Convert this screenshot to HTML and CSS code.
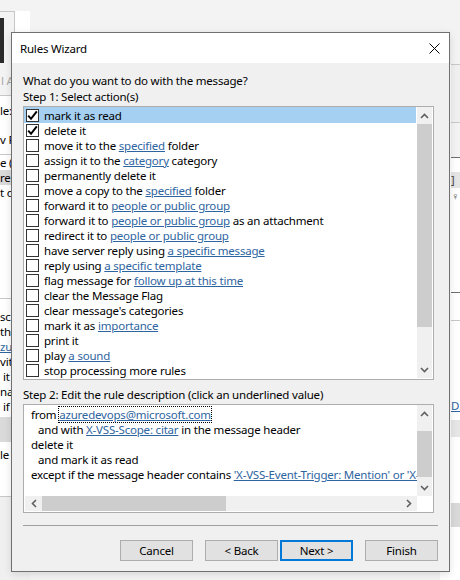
FILE: index.html
```html
<!DOCTYPE html>
<html>
<head>
<meta charset="utf-8">
<title>Rules Wizard</title>
<link rel="stylesheet" href="styles.css">
</head>
<body>
<div class="desktop">
  <div class="bg-left">
    <div class="bg-top"></div>
    <div class="thumb-frame"><div class="thumb-dark"></div></div>
    <div class="bg-line txt dim">l A</div>
    <div class="bg-rule"></div>
    <div class="bg-line txt">le:</div>
    <div class="bg-line txt">v R</div>
    <div class="bg-rule"></div>
    <div class="bg-row txt">e (a</div>
    <div class="bg-row txt sel">re</div>
    <div class="bg-row txt">t o</div>
    <div class="bg-fill98"></div>
    <div class="bg-rule"></div>
    <div class="bg-gap10"></div>
    <div class="bg-row txt">scr</div>
    <div class="bg-row txt">thi</div>
    <div class="bg-row txt link">zu</div>
    <div class="bg-row txt">vit</div>
    <div class="bg-row txt ind">it</div>
    <div class="bg-row txt">na</div>
    <div class="bg-row txt ind">if</div>
    <div class="bg-bar"></div>
    <div class="bg-gap6"></div>
    <div class="bg-row txt">le</div>
    <div class="bg-gap35"></div>
    <div class="bg-rule"></div>
    <div class="bg-bottom"></div>
  </div>

  <div class="bg-right">
    <div class="r-top"></div>
    <div class="r-rule"></div>
    <div class="r-band57"></div>
    <div class="r-rule"></div>
    <div class="r-band34"></div>
    <div class="r-rule dark"></div>
    <div class="r-gap14"></div>
    <div class="r-row grey"><span class="r-glyph">]</span></div>
    <div class="r-row"><span class="r-glyph">&#x2640;</span></div>
    <div class="r-gap90"></div>
    <div class="r-rule dark"></div>
    <div class="r-gap27"></div>
    <div class="r-rule"></div>
    <div class="r-gap77"></div>
    <div class="r-row link">D:</div>
    <div class="r-bar17"></div>
    <div class="r-gap65"></div>
    <div class="r-bar24"></div>
  </div>

  <div class="dialog">
    <div class="titlebar">
      <span class="title">Rules Wizard</span>
      <svg class="close" width="11" height="11" viewBox="0 0 11 11"><path d="M0.5 0.5 L10.5 10.5 M10.5 0.5 L0.5 10.5" stroke="#000" stroke-width="1" fill="none"/></svg>
    </div>
    <div class="body">
      <div class="label first">What do you want to do with the message?</div>
      <div class="label">Step 1: Select action(s)</div>

      <div class="listbox actions">
        <ul class="rows">
          <li class="row selected"><span class="cb"><svg width="11" height="11" viewBox="0 0 11 11"><path d="M1.2 5.6 L4 8.8 L9.8 1.4" stroke="#000" stroke-width="2" fill="none"/></svg></span><span>mark it as read</span></li>
          <li class="row"><span class="cb"><svg width="11" height="11" viewBox="0 0 11 11"><path d="M1.2 5.6 L4 8.8 L9.8 1.4" stroke="#000" stroke-width="2" fill="none"/></svg></span><span>delete it</span></li>
          <li class="row"><span class="cb"></span><span>move it to the <a>specified</a> folder</span></li>
          <li class="row"><span class="cb"></span><span>assign it to the <a>category</a> category</span></li>
          <li class="row"><span class="cb"></span><span>permanently delete it</span></li>
          <li class="row"><span class="cb"></span><span>move a copy to the <a>specified</a> folder</span></li>
          <li class="row"><span class="cb"></span><span>forward it to <a>people or public group</a></span></li>
          <li class="row"><span class="cb"></span><span>forward it to <a>people or public group</a> as an attachment</span></li>
          <li class="row"><span class="cb"></span><span>redirect it to <a>people or public group</a></span></li>
          <li class="row"><span class="cb"></span><span>have server reply using <a>a specific message</a></span></li>
          <li class="row"><span class="cb"></span><span>reply using <a>a specific template</a></span></li>
          <li class="row"><span class="cb"></span><span>flag message for <a>follow up at this time</a></span></li>
          <li class="row"><span class="cb"></span><span>clear the Message Flag</span></li>
          <li class="row"><span class="cb"></span><span>clear message's categories</span></li>
          <li class="row"><span class="cb"></span><span>mark it as <a>importance</a></span></li>
          <li class="row"><span class="cb"></span><span>print it</span></li>
          <li class="row"><span class="cb"></span><span>play <a>a sound</a></span></li>
          <li class="row"><span class="cb"></span><span>stop processing more rules</span></li>
        </ul>
        <div class="vscroll">
          <div class="arrow"><svg width="9" height="6" viewBox="0 0 9 6"><path d="M1 5 L4.5 1.5 L8 5" stroke="#606060" stroke-width="1.6" fill="none"/></svg></div>
          <div class="thumb big"></div>
          <div class="track"></div>
          <div class="arrow"><svg width="9" height="6" viewBox="0 0 9 6"><path d="M1 1 L4.5 4.5 L8 1" stroke="#606060" stroke-width="1.6" fill="none"/></svg></div>
        </div>
      </div>

      <div class="label step2">Step 2: Edit the rule description (click an underlined value)</div>

      <div class="listbox desc">
        <div class="desc-text">
          <div class="dline">from <a class="focus">azuredevops@microsoft.com</a></div>
          <div class="dline ind">and with <a>X-VSS-Scope: citar</a> in the message header</div>
          <div class="dline">delete it</div>
          <div class="dline ind">and mark it as read</div>
          <div class="dline">except if the message header contains <a>'X-VSS-Event-Trigger: Mention' or 'X-VSS-Event-Trigger: Assigned'</a></div>
        </div>
        <div class="vscroll small">
          <div class="arrow"><svg width="9" height="6" viewBox="0 0 9 6"><path d="M1 5 L4.5 1.5 L8 5" stroke="#606060" stroke-width="1.6" fill="none"/></svg></div>
          <div class="track t9"></div>
          <div class="thumb mid"></div>
          <div class="track"></div>
          <div class="arrow"><svg width="9" height="6" viewBox="0 0 9 6"><path d="M1 1 L4.5 4.5 L8 1" stroke="#606060" stroke-width="1.6" fill="none"/></svg></div>
        </div>
        <div class="hscroll">
          <div class="harrow"><svg width="6" height="9" viewBox="0 0 6 9"><path d="M5 1 L1.5 4.5 L5 8" stroke="#606060" stroke-width="1.6" fill="none"/></svg></div>
          <div class="hthumb"></div>
          <div class="htrack"></div>
          <div class="harrow"><svg width="6" height="9" viewBox="0 0 6 9"><path d="M1 1 L4.5 4.5 L1 8" stroke="#606060" stroke-width="1.6" fill="none"/></svg></div>
        </div>
        <div class="corner"></div>
      </div>

      <div class="sep"></div>

      <div class="buttons">
        <button class="btn">Cancel</button>
        <button class="btn back">&lt; Back</button>
        <button class="btn next">Next &gt;</button>
        <button class="btn finish">Finish</button>
      </div>
    </div>
  </div>
</div>
</body>
</html>
```

FILE: styles.css
```css
* { box-sizing: border-box; }
html, body { margin: 0; padding: 0; }
body {
  font-family: "Noto Sans", "Open Sans", sans-serif;
  font-size: 11.5px;
  letter-spacing: -0.2px;
  color: #000;
  background: #f3f3f3;
}
.desktop {
  position: relative;
  width: 460px;
  height: 580px;
  overflow: hidden;
  background: #f3f3f3;
}

/* ---------- background window, left strip ---------- */
.bg-left {
  position: absolute;
  left: 0;
  top: 0;
  width: 30px;
  height: 580px;
  background: #fff;
  display: flex;
  flex-direction: column;
}
.bg-top { height: 11px; background: #f3f3f3; flex: none; }
.thumb-frame {
  height: 55px;
  flex: none;
  border-top: 1px solid #c6c6c6;
  border-right: 1px solid #c6c6c6;
  width: 15px;
  background: #f3f3f3;
  padding-top: 6px;
}
.thumb-dark { width: 4px; height: 45px; background: #2b2b2b; }
.txt { white-space: nowrap; line-height: 15px; flex: none; overflow: hidden; }
.bg-line { height: 29px; line-height: 29px; background: #fff; }
.bg-left .bg-line:nth-child(3) { background: #f3f3f3; }
.dim { color: #a8a8a8; padding-left: 1px; }
.bg-rule { height: 1px; background: #c8c8c8; flex: none; }
.bg-row { height: 15px; background: #fff; }
.bg-row.sel { background: #dadada; }
.bg-row.ind { padding-left: 3px; }
.bg-row.link { color: #2e64a0; text-decoration: underline; }
.bg-fill98 { height: 98px; background: #fff; flex: none; }
.bg-gap10 { height: 10px; flex: none; }
.bg-bar { height: 25px; background: #dadada; flex: none; margin-top: 3px; }
.bg-gap6 { height: 5px; flex: none; }
.bg-gap35 { height: 34px; flex: none; }
.bg-bottom { flex: 1; background: #f0f0f0; }

/* ---------- background window, right strip ---------- */
.bg-right {
  position: absolute;
  left: 440px;
  top: 0;
  width: 20px;
  height: 580px;
  background: #fff;
  display: flex;
  flex-direction: column;
  padding-left: 11px;
}
.bg-right > div { flex: none; }
.r-top { height: 64px; background: #f3f3f3; margin-left: -11px; }
.r-rule { height: 1px; background: #c8c8c8; }
.r-rule.dark { background: #6f6f6f; }
.r-band57 { height: 57px; background: #f0f0f0; }
.r-band34 { height: 34px; background: #f3f3f3; }
.r-gap14 { height: 14px; }
.r-row { height: 16px; line-height: 16px; white-space: nowrap; overflow: hidden; }
.r-row.grey { background: #e5e5e5; }
.r-glyph { font-size: 11px; color: #444; }
.r-row.link { color: #2e64a0; text-decoration: underline; }
.r-gap90 { height: 88px; }
.r-gap27 { height: 27px; }
.r-gap77 { height: 77px; }
.r-bar17 { height: 17px; background: #e6e6e6; margin-top: 6px; }
.r-gap65 { height: 66px; }
.r-bar24 { height: 24px; background: #d9d9d9; }

/* ---------- dialog ---------- */
.dialog {
  position: absolute;
  left: 11px;
  top: 32px;
  width: 439px;
  height: 540px;
  border: 1px solid #707070;
  background: #f0f0f0;
  display: flex;
  flex-direction: column;
  box-shadow: 0 2px 8px rgba(0, 0, 0, 0.12);
}
.titlebar {
  height: 30px;
  background: #fff;
  display: flex;
  align-items: center;
  justify-content: space-between;
  padding: 0 9px 0 8px;
  flex: none;
}
.close { display: block; }

.body {
  flex: 1;
  padding: 0 11px 0 11px;
  display: flex;
  flex-direction: column;
}
.label { line-height: 16px; height: 16px; white-space: nowrap; }
.label.first { margin-top: 10px; }
.label.step2 { margin-top: 7px; }

a { color: #2e64a0; text-decoration: underline; }

.listbox {
  width: 411px;
  border: 1px solid #adadad;
  background: #fff;
  flex: none;
}
.actions {
  margin-top: 1px;
  height: 274px;
  display: flex;
  padding: 0 1px 1px 0;
}
.rows {
  list-style: none;
  margin: 0;
  padding: 1px 0 0 0;
  flex: 1;
  min-width: 0;
}
.row {
  height: 15px;
  line-height: 15px;
  display: flex;
  align-items: center;
  padding-left: 2px;
  white-space: nowrap;
  margin-right: 1px;
}
.row.selected { background: #a6d0f1; margin-top: -1px; height: 16px; padding-top: 1px; }
.cb {
  width: 13px;
  height: 13px;
  border: 1px solid #333;
  background: #fff;
  flex: none;
  margin-right: 5px;
  display: flex;
  align-items: center;
  justify-content: center;
}
.cb svg { display: block; }

.vscroll {
  width: 15px;
  flex: none;
  background: #f0f0f0;
  display: flex;
  flex-direction: column;
}
.vscroll .arrow {
  height: 17px;
  display: flex;
  align-items: center;
  justify-content: center;
  flex: none;
}
.vscroll .thumb { background: #cdcdcd; flex: none; }
.thumb.big { height: 203px; }
.thumb.mid { height: 46px; }
.vscroll .track { flex: 1; }
.vscroll .track.t9 { flex: none; height: 9px; }

.desc {
  margin-top: 1px;
  height: 109px;
  display: grid;
  grid-template-columns: 1fr 15px;
  grid-template-rows: 1fr 15px;
  padding: 0 1px 1px 0;
}
.desc-text {
  padding: 2px 0 0 7px;
  overflow: hidden;
  min-width: 0;
}
.dline { height: 15px; line-height: 15px; white-space: nowrap; }
.dline.ind { padding-left: 7px; }
.focus { outline: 1px dotted #000; outline-offset: 0; }

.hscroll {
  display: flex;
  background: #f0f0f0;
  margin-left: 1px;
}
.harrow {
  width: 17px;
  flex: none;
  display: flex;
  align-items: center;
  justify-content: center;
}
.hthumb { width: 184px; background: #cdcdcd; flex: none; }
.htrack { flex: 1; }
.corner { background: #fff; }

.sep {
  height: 1px;
  background: #a0a0a0;
  margin-top: 12px;
  flex: none;
}
.buttons {
  margin-top: 14px;
  display: flex;
  justify-content: flex-end;
  flex: none;
}
.btn {
  width: 73px;
  height: 21px;
  border: 1px solid #adadad;
  background: #e1e1e1;
  font-family: "Noto Sans", "Open Sans", sans-serif;
  font-size: 11.5px;
  letter-spacing: -0.2px;
  color: #000;
  padding: 0;
  line-height: 18px;
}
.btn.back { margin-left: 12px; }
.btn.next { margin-left: 2px; border: 2px solid #0078d7; }
.btn.finish { margin-left: 12px; }
```
